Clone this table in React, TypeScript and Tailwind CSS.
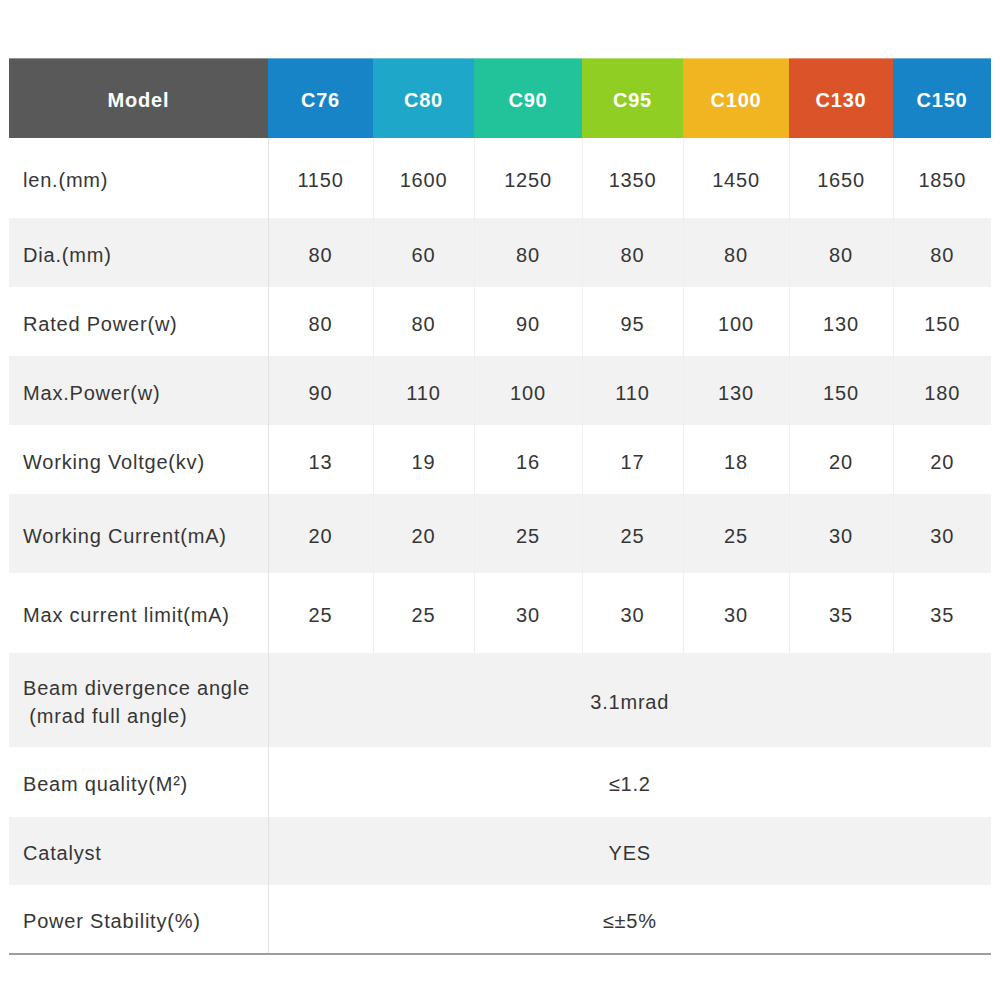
const models = [
  { name: "C76", bg: "bg-[#1784c7]" },
  { name: "C80", bg: "bg-[#1ea7c9]" },
  { name: "C90", bg: "bg-[#22c29a]" },
  { name: "C95", bg: "bg-[#90ce23]" },
  { name: "C100", bg: "bg-[#f2b522]" },
  { name: "C130", bg: "bg-[#db5429]" },
  { name: "C150", bg: "bg-[#1784c7]" },
];

const colWidths = ["w-[259px]", "w-[105px]", "w-[101px]", "w-[108px]", "w-[101px]", "w-[106px]", "w-[104px]", "w-[98px]"];

type Row = { label: React.ReactNode; h: string; values?: string[]; merged?: string };

const rows: Row[] = [
  { label: "len.(mm)", h: "h-[80px]", values: ["1150", "1600", "1250", "1350", "1450", "1650", "1850"] },
  { label: "Dia.(mm)", h: "h-[69px]", values: ["80", "60", "80", "80", "80", "80", "80"] },
  { label: "Rated Power(w)", h: "h-[69px]", values: ["80", "80", "90", "95", "100", "130", "150"] },
  { label: "Max.Power(w)", h: "h-[69px]", values: ["90", "110", "100", "110", "130", "150", "180"] },
  { label: "Working Voltge(kv)", h: "h-[69px]", values: ["13", "19", "16", "17", "18", "20", "20"] },
  { label: "Working Current(mA)", h: "h-[79px]", values: ["20", "20", "25", "25", "25", "30", "30"] },
  { label: "Max current limit(mA)", h: "h-[80px]", values: ["25", "25", "30", "30", "30", "35", "35"] },
  {
    label: (
      <>
        Beam divergence angle
        <br />
        {"\u00a0(mrad full angle)"}
      </>
    ),
    h: "h-[94px]",
    merged: "3.1mrad",
  },
  { label: "Beam quality(M²)", h: "h-[70px]", merged: "≤1.2" },
  { label: "Catalyst", h: "h-[68px]", merged: "YES" },
  { label: "Power Stability(%)", h: "h-[69px]", merged: "≤±5%" },
];

export default function App() {
  return (
    <div className="min-h-screen bg-white pt-[58px] pl-[9px] font-['Liberation_Sans',Arial,sans-serif]">
      <table className="w-[982px] table-fixed border-collapse border-b-2 border-[#9e9e9e] text-[20px] tracking-[0.8px] text-[#363636]">
        <colgroup>
          {colWidths.map((w, i) => (
            <col key={i} className={w} />
          ))}
        </colgroup>
        <thead>
          <tr className="h-[80px] text-white font-bold">
            <th className="bg-[#595959] pt-1 shadow-[inset_0_1px_0_rgba(255,255,255,0.35)] text-center font-bold">Model</th>
            {models.map((m) => (
              <th key={m.name} className={`${m.bg} pt-1 shadow-[inset_0_1px_0_rgba(255,255,255,0.35)] text-center font-bold`}>
                {m.name}
              </th>
            ))}
          </tr>
        </thead>
        <tbody>
          {rows.map((r, i) => {
            const bg = i % 2 === 1 ? "bg-[#f2f2f2]" : "bg-white";
            return (
              <tr key={i} className={`${r.h} ${bg}`}>
                <td className="border-r border-[#e2e2e2] pl-[14px] pt-1 text-left leading-[28px]">{r.label}</td>
                {r.merged ? (
                  <td colSpan={7} className="pt-1 text-center">
                    {r.merged}
                  </td>
                ) : (
                  r.values!.map((v, j) => (
                    <td key={j} className={`pt-1 text-center ${j < 6 ? "border-r border-[#efefef]" : ""}`}>
                      {v}
                    </td>
                  ))
                )}
              </tr>
            );
          })}
        </tbody>
      </table>
    </div>
  );
}
